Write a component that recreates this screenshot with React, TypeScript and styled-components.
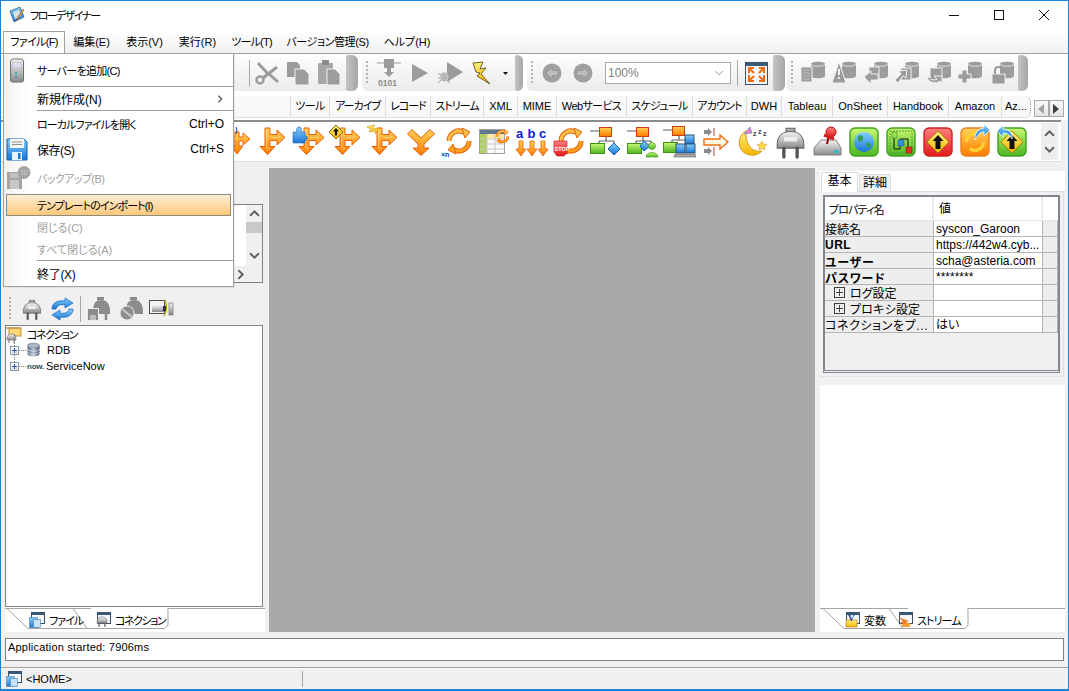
import React from "react";
import styled, { createGlobalStyle } from "styled-components";

const Global = createGlobalStyle`
  html, body { margin: 0; padding: 0; background: #fff; overflow: hidden; }
  #root { width: 1069px; height: 691px; }
  * { box-sizing: border-box; }
`;

const FONT = `"Liberation Sans", "Noto Sans CJK JP", sans-serif`;

const Window = styled.div`
  position: relative;
  width: 1069px;
  height: 691px;
  border: 1px solid #1883d7;
  border-bottom-width: 2px;
  background: #f0f0f0;
  display: flex;
  flex-direction: column;
  font-family: ${FONT};
  font-size: 11px;
  font-feature-settings: "palt";
  color: #000;
  overflow: hidden;
`;

const Txt = styled.span<{ $ls?: number; $fs?: number }>`
  font-size: ${(p) => p.$fs ?? 11}px;
  letter-spacing: ${(p) => p.$ls ?? 0}px;
  white-space: nowrap;
`;

/* ---------- title + menu ---------- */
const TitleBar = styled.div`
  height: 30px;
  background: #fff;
  display: flex;
  align-items: center;
  padding: 0 2px 2px 8px;
  flex: none;
`;
const TitleText = styled.span`
  margin-left: 5px;
  font-size: 11px;
  letter-spacing: -1.6px;
`;
const WinButtons = styled.div`
  margin-left: auto;
  display: flex;
`;
const WinButton = styled.div`
  width: 45px;
  height: 28px;
  display: flex;
  align-items: center;
  justify-content: center;
`;
const MenuBar = styled.div`
  height: 23px;
  flex: none;
  display: flex;
  align-items: center;
  background: linear-gradient(#fff, #f0f0f0);
  border-bottom: 1px solid #a0a0a0;
  padding-left: 2px;
`;
const MenuItem = styled.div<{ $w: number; $open?: boolean; $ls?: number }>`
  width: ${(p) => p.$w}px;
  height: 22px;
  text-align: center;
  line-height: 22px;
  white-space: nowrap;
  font-size: 11px;
  letter-spacing: ${(p) => p.$ls ?? 0}px;
  ${(p) => (p.$open ? "border:1px solid #a0a0a0;border-bottom:none;background:#fff;line-height:21px;z-index:3;" : "")}
`;

/* ---------- toolbar ---------- */
const ToolRow = styled.div`
  height: 41px;
  flex: none;
  display: flex;
  align-items: flex-start;
  padding: 1px 0 0 2px;
  background: #fff;
`;
const ToolGroup = styled.div<{ $w: number; $ml?: number }>`
  width: ${(p) => p.$w}px;
  margin-left: ${(p) => p.$ml ?? 0}px;
  height: 36px;
  display: flex;
  align-items: center;
  border-radius: 5px;
  background: linear-gradient(#fdfdfd, #ebebeb);
`;
const GroupEnd = styled.div<{ $w: number }>`
  margin-left: auto;
  width: ${(p) => p.$w}px;
  height: 36px;
  border-radius: 2px 6px 6px 2px;
  background: linear-gradient(90deg, #c4c4c4, #a6a6a6);
`;
const Grip = styled.div<{ $w?: number }>`
  width: ${(p) => p.$w ?? 11}px;
  height: 24px;
  flex: none;
  padding-left: 4px;
  &::before {
    content: "";
    display: block;
    width: 2px;
    height: 100%;
    background: repeating-linear-gradient(#b4b4b4 0 2px, transparent 2px 4px);
  }
`;
const ToolCell = styled.div<{ $w?: number }>`
  width: ${(p) => p.$w ?? 31}px;
  height: 30px;
  flex: none;
  display: flex;
  align-items: center;
  justify-content: center;
`;
const ToolSep = styled.div<{ $mx?: number }>`
  width: 1px;
  height: 26px;
  flex: none;
  margin: 0 ${(p) => p.$mx ?? 2}px;
  background: #a8a8a8;
`;
const Combo = styled.div`
  width: 126px;
  height: 22px;
  flex: none;
  margin-left: 7px;
  border: 1px solid #a8a8a8;
  background: #fff;
  display: flex;
  align-items: center;
  justify-content: space-between;
  padding: 0 6px 0 2px;
  color: #808080;
  font-size: 12px;
`;

/* ---------- palette ---------- */
const PaletteTabs = styled.div`
  height: 25px;
  flex: none;
  background: #fff;
  display: flex;
  align-items: flex-start;
  padding: 1px 4px 0 0;
`;
const PaletteTab = styled.div<{ $w: number; $ragged?: boolean; $ls?: number }>`
  width: ${(p) => p.$w}px;
  height: 22px;
  flex: none;
  background: #f9f9f9;
  border-right: 1px solid #dcdcdc;
  border-bottom: 1px solid #e0e0e0;
  text-align: center;
  line-height: 21px;
  white-space: nowrap;
  font-size: 11px;
  letter-spacing: ${(p) => p.$ls ?? 0}px;
  ${(p) => (p.$ragged ? "border-right:1px dotted #909090;border-radius:0 6px 6px 0;" : "")}
`;
const TabArrow = styled.div`
  width: 15px;
  height: 17px;
  margin-top: 4px;
  flex: none;
  border: 1px solid #a8a8a8;
  background: linear-gradient(#fafafa, #e4e4e4);
  display: flex;
  align-items: center;
  justify-content: center;
`;
const TabArrows = styled.div`
  margin-left: 3px;
  display: flex;
  gap: 0;
`;
const PaletteBody = styled.div`
  height: 42px;
  flex: none;
  margin-right: 7px;
  background: #fff;
  border-top: 2px solid #8c8c8c;
  border-bottom: 1px solid #dcdcdc;
  display: flex;
  align-items: center;
  padding-left: 32px;
`;
const PaletteCell = styled.div<{ $shift?: number }>`
  width: 36.95px;
  height: 38px;
  flex: none;
  display: flex;
  align-items: center;
  justify-content: center;
  padding-left: ${(p) => p.$shift ?? 0}px;
`;
const PaletteScroll = styled.div`
  margin-left: 11px;
  width: 17px;
  height: 37px;
  flex: none;
  background: #eeeeee;
  display: flex;
  flex-direction: column;
  align-items: center;
  justify-content: space-between;
  padding: 5px 0;
`;

/* ---------- main ---------- */
const Main = styled.div`
  margin-top: 6px;
  height: 464px;
  flex: none;
  display: flex;
  padding-left: 4px;
`;
const LeftCol = styled.div`
  width: 258px;
  flex: none;
  display: flex;
  flex-direction: column;
`;
const ListArea = styled.div`
  height: 124px;
  flex: none;
  padding-top: 36px;
`;
const ListFrame = styled.div`
  height: 79px;
  border: 1px solid #80808c;
  background: #f0f0f0;
  display: grid;
  grid-template-columns: 1fr 16px;
  grid-template-rows: 1fr 16px;
`;
const ListWhite = styled.div`
  background: #fff;
  border-radius: 0 0 3px 0;
`;
const VScroll = styled.div`
  display: flex;
  flex-direction: column;
  align-items: center;
  padding-top: 3px;
`;
const VThumb = styled.div`
  width: 100%;
  height: 11px;
  margin: 3px 0 17px;
  background: #c9c9c9;
`;
const HScrollSlot = styled.div`
  grid-column: 1;
  display: flex;
  justify-content: flex-end;
  align-items: center;
`;
const LeftTools = styled.div`
  height: 33px;
  flex: none;
  display: flex;
  align-items: center;
`;
const Tree = styled.div`
  height: 282px;
  flex: none;
  background: #fff;
  border: 1px solid #80808c;
  position: relative;
`;
const TreeRow = styled.div<{ $child?: boolean }>`
  height: 16px;
  display: flex;
  align-items: center;
  position: relative;
  padding-left: ${(p) => (p.$child ? 4 : 0)}px;
  font-size: 11px;
  white-space: nowrap;
  ${(p) =>
    p.$child
      ? `&::before{content:"";position:absolute;left:8px;top:-8px;height:12px;border-left:1px dotted #808080;}`
      : ""}
`;
const PlusBox = styled.span`
  width: 9px;
  height: 9px;
  flex: none;
  border: 1px solid #8c9aa8;
  background: linear-gradient(#fff, #dde3ea);
  position: relative;
  z-index: 1;
  &::before { content: ""; position: absolute; left: 1px; right: 1px; top: 3px; height: 1px; background: #2050a0; }
  &::after { content: ""; position: absolute; top: 1px; bottom: 1px; left: 3px; width: 1px; background: #2050a0; }
`;
const Dots = styled.span`
  width: 7px;
  flex: none;
  border-top: 1px dotted #808080;
  margin-right: 1px;
`;
const TreeLabel = styled.span<{ $ml: number; $ls?: number }>`
  margin-left: ${(p) => p.$ml}px;
  font-size: 11px;
  letter-spacing: ${(p) => p.$ls ?? 0}px;
`;
const NowMark = styled.span`
  width: 17px;
  flex: none;
  font-size: 8px;
  font-weight: 700;
  color: #30504c;
  letter-spacing: -0.2px;
`;
const Canvas = styled.div`
  width: 546px;
  margin-left: 6px;
  flex: none;
  background: #a9a9a9;
`;
const RightCol = styled.div`
  width: 245px;
  margin-left: 5px;
  flex: none;
  display: flex;
  flex-direction: column;
  padding-top: 3px;
`;
const PropBox = styled.div`
  height: 205px;
  flex: none;
  background: #f0f0f0;
  display: flex;
  flex-direction: column;
`;
const PropTabs = styled.div`
  height: 21px;
  flex: none;
  background: #fff;
  display: flex;
  align-items: flex-end;
  padding-left: 1px;
  border-bottom: 1px solid #dcdcdc;
`;
const PropTab = styled.div<{ $w: number; $on?: boolean }>`
  width: ${(p) => p.$w}px;
  height: ${(p) => (p.$on ? 20 : 17)}px;
  text-align: center;
  line-height: ${(p) => (p.$on ? 17 : 16)}px;
  font-size: 12px;
  border: 1px solid #dcdcdc;
  border-bottom: none;
  background: ${(p) => (p.$on ? "#fff" : "#f0f0f0")};
  margin-right: 1px;
  ${(p) => (p.$on ? "margin-bottom:-1px;" : "")}
`;
const PropPanel = styled.div`
  flex: 1;
  padding: 3px 2px 3px 3px;
  border: 1px solid #e2e2e2;
  border-top: none;
  border-left: none;
  margin-right: 1px;
`;
const PropFrame = styled.div`
  height: 178px;
  width: 237px;
  border: 2px solid #85858f;
  border-bottom-style: double;
  border-bottom-width: 3px;
  background: #efefef;
`;
const PropRow = styled.div<{ $head?: boolean }>`
  display: grid;
  grid-template-columns: 109px 109px 15px;
  height: ${(p) => (p.$head ? 24 : 16)}px;
  width: 233px;
  ${(p) => (p.$head ? "" : "border-bottom:1px solid #b4b4b4;")}
`;
const PropName = styled.div<{ $head?: boolean; $bold?: boolean; $indent?: number }>`
  background: ${(p) => (p.$head ? "#fff" : "#eeeeee")};
  ${(p) => (p.$head ? "border-right:2px solid #ececec;border-bottom:1px solid #e4e4e4;" : "border-right:1px solid #b4b4b4;")}
  ${(p) => (p.$bold ? "padding-top:1px;font-weight:700;" : "font-weight:400;")}
  padding-left: ${(p) => p.$indent ?? (p.$head ? 4 : 0)}px;
  display: flex;
  align-items: center;
  white-space: nowrap;
  overflow: hidden;
`;
const PropValue = styled.div<{ $head?: boolean }>`
  background: #fff;
  ${(p) => (p.$head ? "border-right:2px solid #ececec;border-bottom:1px solid #e4e4e4;line-height:25px;padding-left:5px;" : "border-right:1px solid #b4b4b4;line-height:16px;padding-left:2px;")}
  font-size: 12px;
  white-space: nowrap;
  overflow: hidden;
`;
const PropEnd = styled.div<{ $head?: boolean }>`
  background: ${(p) => (p.$head ? "#fff" : "#eeeeee")};
  ${(p) => (p.$head ? "border-bottom:1px solid #e4e4e4;" : "border-right:1px solid #b4b4b4;")}
`;
const Expand = styled.span`
  width: 11px;
  height: 11px;
  flex: none;
  margin-right: 5px;
  border: 1px solid #404040;
  position: relative;
  &::before { content: ""; position: absolute; left: 1px; right: 1px; top: 4px; height: 1px; background: #404040; }
  &::after { content: ""; position: absolute; top: 1px; bottom: 1px; left: 4px; width: 1px; background: #404040; }
`;
const WhitePanel = styled.div`
  margin-top: 9px;
  flex: 1;
  background: #fff;
`;
const BottomTabs = styled.div<{ $w: number }>`
  position: relative;
  width: ${(p) => p.$w}px;
  height: 25px;
  flex: none;
  background: #fff;
  display: flex;
  align-items: center;
  font-size: 11px;
`;
const TabOutline = styled.svg`
  position: absolute;
  left: 0;
  top: 0;
`;
const BottomTabLabel = styled.div<{ $ml: number }>`
  position: relative;
  margin-left: ${(p) => p.$ml}px;
  display: flex;
  align-items: center;
  gap: 4px;
`;

/* ---------- log + status ---------- */
const LogBox = styled.div`
  margin: 6px 4px 0 4px;
  height: 23px;
  flex: none;
  background: #fff;
  border: 1px solid #80808c;
  padding: 1px 2px;
  line-height: 15px;
  font-size: 11px;
  letter-spacing: 0.2px;
`;
const StatusBar = styled.div`
  margin-top: 6px;
  flex: 1;
  border-top: 1px solid #a0a0a0;
  box-shadow: inset 0 1px 0 #fafafa;
  display: flex;
  align-items: center;
  padding-left: 5px;
`;
const StatusHome = styled.div`
  width: 297px;
  height: 16px;
  flex: none;
  display: flex;
  align-items: center;
  gap: 4px;
  border-right: 1px solid #a8a8a8;
  font-size: 11px;
`;

/* ---------- file menu ---------- */
const FileMenu = styled.div`
  position: absolute;
  left: 2px;
  top: 52px;
  width: 231px;
  height: 234px;
  background: linear-gradient(90deg, #f2f2f2 0, #fff 25px, #fff 100%);
  border: 1px solid #a0a0a0;
  box-shadow: 1px 1px 0 rgba(0, 0, 0, 0.06);
  z-index: 2;
  display: flex;
  flex-direction: column;
  font-size: 11px;
`;
const MenuRow = styled.div<{ $h: number; $off?: boolean; $active?: boolean }>`
  height: ${(p) => p.$h}px;
  flex: none;
  display: flex;
  align-items: center;
  padding-right: 9px;
  color: ${(p) => (p.$off ? "#a0a0a0" : "#000")};
  ${(p) =>
    p.$active
      ? "background:linear-gradient(#fdedd2,#fdc87c);border:1px solid #908c7c;margin:0 2px;padding-right:7px;"
      : ""}
`;
const MenuIconSlot = styled.div<{ $active?: boolean; $pl?: number }>`
  width: ${(p) => (p.$active ? 30 : 33)}px;
  flex: none;
  display: flex;
  align-items: center;
  padding-left: ${(p) => p.$pl ?? 2}px;
`;
const MenuShortcut = styled.span`
  margin-left: auto;
  font-size: 12px;
`;
const MenuSep = styled.div`
  height: 1px;
  flex: none;
  margin-left: 33px;
  background: #a0a0a0;
`;

/* ---------- icon primitives ---------- */
const Ico = styled.svg`
  display: block;
  flex: none;
  overflow: visible;
`;

const Defs = () => (
  <svg width="0" height="0" style={{ position: "absolute" }}>
    <defs>
      <linearGradient id="og" x1="0" y1="0" x2="0" y2="1"><stop offset="0" stopColor="#ffd257" /><stop offset="1" stopColor="#ff7b00" /></linearGradient>
      <linearGradient id="gg" x1="0" y1="0" x2="0" y2="1"><stop offset="0" stopColor="#c8f870" /><stop offset="1" stopColor="#4cb524" /></linearGradient>
      <linearGradient id="rg" x1="0" y1="0" x2="0" y2="1"><stop offset="0" stopColor="#ff8080" /><stop offset="1" stopColor="#e21a1a" /></linearGradient>
      <linearGradient id="bg" x1="0" y1="0" x2="0" y2="1"><stop offset="0" stopColor="#86d0ff" /><stop offset="1" stopColor="#1876d6" /></linearGradient>
      <linearGradient id="yg" x1="0" y1="0" x2="0" y2="1"><stop offset="0" stopColor="#fff080" /><stop offset="1" stopColor="#f4b400" /></linearGradient>
      <linearGradient id="sg" x1="0" y1="0" x2="0" y2="1"><stop offset="0" stopColor="#f6f6f6" /><stop offset="1" stopColor="#8a8a8a" /></linearGradient>
      <linearGradient id="dg" x1="0" y1="0" x2="1" y2="0"><stop offset="0" stopColor="#4f6478" /><stop offset=".5" stopColor="#b8c4d4" /><stop offset="1" stopColor="#3c5068" /></linearGradient>
    </defs>
  </svg>
);

const OS = "#e8610a";
const FORK = "M5 1H10V7.500H17V3L25 10.500L17 18V13.500H10V19.500H15L7.500 27.500L0 19.500H5Z";

const Badge = ({ kind }: { kind: "puzzle" | "diamond" | "bolt" }) => {
  if (kind === "puzzle")
    return <path d="M0 6H4C3 3 4 1 6 1S9 3 8 6H12V10C15 9 15 15 12 14V17H0Z" fill="url(#bg)" stroke="#1a5fb4" strokeWidth=".6" transform="translate(-6 -1)" />;
  if (kind === "diamond")
    return (
      <g transform="translate(-6 -2)">
        <path d="M7 0L14 7L7 14L0 7Z" fill="url(#yg)" stroke="#8a6a00" />
        <path d="M7 3L10 6.500H8V10.500H6V6.500H4Z" fill="#111" />
      </g>
    );
  return <path d="M0 2L8 0L5 4L13 3L8 9L9 6L2 7L4 4Z" fill="url(#yg)" stroke="#d89000" strokeWidth=".6" transform="translate(-5 -2)" />;
};

const Fork = ({ badge }: { badge?: "puzzle" | "diamond" | "bolt" }) => (
  <Ico width="26" height="29" viewBox="0 0 26 29">
    <path d={FORK} fill="url(#og)" stroke={OS} strokeWidth="1" />
    <path d="M6.500 3V21H10L7.500 24M12 10.500H20" fill="none" stroke="#fff" strokeOpacity=".35" />
    {badge && <Badge kind={badge} />}
  </Ico>
);

const RadioFork = () => (
  <Ico width="26" height="29" viewBox="0 0 26 29">
    <path d="M10 5H14V10H18V6L25 12L18 18V14H14V19H18L12 27L6 19H10V14H6V18L0 12L6 6V10H10Z" fill="url(#og)" stroke={OS} />
    <path d="M8 1A5 5 0 0 1 8 6M11 0A7 7 0 0 1 11 7" fill="none" stroke="#2040b0" />
  </Ico>
);

const YMerge = () => (
  <Ico width="28" height="28" viewBox="0 0 28 28">
    <path d="M.5 6L5 1.500L14 10L23 1.500L27.500 6L17 16V20H22L14 27.500L6 20H11V16Z" fill="url(#og)" stroke={OS} />
  </Ico>
);

const Cycle = ({ s = 28 }: { s?: number }) => (
  <g transform={`scale(${s / 28})`}>
    <path d="M4 14A10 10 0 0 1 20 6" fill="none" stroke={OS} strokeWidth="5" />
    <path d="M4 14A10 10 0 0 1 20 6" fill="none" stroke="#ffc04a" strokeWidth="3" />
    <path d="M24 14A10 10 0 0 1 8 22" fill="none" stroke={OS} strokeWidth="5" />
    <path d="M24 14A10 10 0 0 1 8 22" fill="none" stroke="#ffa020" strokeWidth="3" />
    <path d="M17 1L25 5L20 11Z" fill="#ffc04a" stroke={OS} />
    <path d="M11 27L3 23L8 17Z" fill="#ffa020" stroke={OS} />
  </g>
);

const Loop = () => (
  <Ico width="30" height="30" viewBox="0 0 30 30">
    <g transform="translate(2 0)"><Cycle /></g>
    <text x="-2" y="30" fontSize="7" fontWeight="700" fill="#2030c0" fontFamily="Liberation Sans">×n</text>
  </Ico>
);

const TableIcon = () => (
  <Ico width="32" height="28" viewBox="0 0 32 28">
    <rect x=".5" y="1.500" width="25" height="24" fill="#fafafa" stroke="#a0a0a0" />
    <rect x="1" y="2" width="24" height="4" fill="#607890" />
    <rect x="1" y="6" width="7" height="19" fill="#b0d060" />
    <rect x="8" y="6" width="17" height="5" fill="#ffe9a0" />
    <path d="M1 11H25M1 16H25M1 21H25M8 6V25M16 6V25" stroke="#c8c8c8" />
    <g transform="translate(16 1)"><Cycle s={15} /></g>
  </Ico>
);

const DownArrow = ({ x }: { x: number }) => (
  <path d={`M${x + 3} 14H${x + 7}V22H${x + 10}L${x + 5} 29L${x} 22H${x + 3}Z`} fill="url(#og)" stroke={OS} strokeWidth=".8" />
);

const AbcIcon = () => (
  <Ico width="34" height="30" viewBox="0 0 34 30">
    <text x="1" y="11" fontSize="13" fontWeight="700" fill="#1018d8" fontFamily="Liberation Sans">a</text>
    <text x="12.500" y="11" fontSize="13" fontWeight="700" fill="#1018d8" fontFamily="Liberation Sans">b</text>
    <text x="24" y="11" fontSize="13" fontWeight="700" fill="#1018d8" fontFamily="Liberation Sans">c</text>
    <DownArrow x={1} /><DownArrow x={12} /><DownArrow x={23} />
  </Ico>
);

const StopLoop = () => (
  <Ico width="32" height="30" viewBox="0 0 32 30">
    <g transform="translate(4 0)"><Cycle /></g>
    <path d="M1 14H14V26L11 29H4L1 25Z" fill="url(#rg)" stroke="#c01010" strokeWidth=".6" />
    <text x="1.500" y="24" fontSize="5.500" fontWeight="700" fill="#fff" fontFamily="Liberation Sans">STOP</text>
  </Ico>
);

const TreeBase = () => (
  <>
    <path d="M0 4H9M16 8V14M9 14H24M9 14V18M24 14V18" fill="none" stroke="#606060" strokeWidth="1.200" />
    <rect x="9.500" y="0.500" width="12" height="9" fill="url(#og)" stroke="#c84010" />
    <rect x="0.500" y="16.500" width="14" height="10" fill="url(#gg)" stroke="#409010" />
  </>
);
const Flow1 = () => (
  <Ico width="31" height="30" viewBox="0 0 31 30">
    <TreeBase />
    <path d="M24 16L30 22L24 28L18 22Z" fill="url(#bg)" stroke="#1060c0" />
  </Ico>
);
const Flow2 = () => (
  <Ico width="31" height="30" viewBox="0 0 31 30">
    <TreeBase />
    <path d="M17 14L23 19L17 24L13 19Z" fill="url(#bg)" stroke="#1060c0" />
    <circle cx="25" cy="19" r="3.500" fill="url(#gg)" stroke="#409010" strokeWidth=".6" />
    <path d="M19 30C19 24 31 24 31 30Z" fill="url(#gg)" stroke="#409010" strokeWidth=".6" />
  </Ico>
);
const Flow3 = () => (
  <Ico width="33" height="32" viewBox="0 0 33 32">
    <TreeBase />
    <rect x="22" y="9" width="9" height="9" fill="url(#bg)" stroke="#305070" />
    <rect x="13" y="18" width="9" height="9" fill="url(#bg)" stroke="#305070" />
    <rect x="23" y="18" width="9" height="9" fill="url(#bg)" stroke="#305070" />
    <path d="M12 28H32L33 31H11Z" fill="#a8a8a8" stroke="#606060" strokeWidth=".6" />
  </Ico>
);
const ArrowIn = () => (
  <Ico width="26" height="30" viewBox="0 0 26 30">
    <path d="M1 3H5V1L9 5L5 9V7H1Z" fill="#8c8c8c" />
    <path d="M1 22H5V20L9 24L5 28V26H1Z" fill="#8c8c8c" />
    <path d="M11 1V9M11 20V29" stroke="#c04040" />
    <path d="M1 12H17V8L25 15L17 22V18H1Z" fill="#fff6e0" stroke="#f07010" strokeWidth="1.400" />
  </Ico>
);
const Moon = () => (
  <Ico width="30" height="32" viewBox="0 0 30 32">
    <path d="M8 5C-2 10 -1 27 12 29C17 30 21 28 24 25C14 27 7 18 8 5Z" fill="url(#yg)" stroke="#d89a20" />
    <path d="M6 8L12 1L14 7Z" fill="#e080d0" stroke="#6080c0" strokeWidth=".6" />
    <text x="15" y="10" fontSize="7" fontWeight="700" fill="#444" fontFamily="Liberation Sans">z</text>
    <text x="20" y="8" fontSize="7" fontWeight="700" fill="#444" fontFamily="Liberation Sans">z</text>
    <text x="25" y="10" fontSize="7" fontWeight="700" fill="#444" fontFamily="Liberation Sans">z</text>
    <path d="M24 15L25.500 18L29 18.500L26.500 21L27 24L24 22.500L21 24L21.500 21L19 18.500L22.500 18Z" fill="#ffd850" stroke="#c09020" strokeWidth=".5" />
  </Ico>
);
const Plug = ({ w = 28 }: { w?: number }) => (
  <Ico width={w} height={w} viewBox="0 0 28 28">
    <path d="M10 2H18V6H10Z" fill="#a8a8a8" stroke="#666" />
    <path d="M2 17C2 8 8 5 14 5S26 8 26 17V20H2Z" fill="url(#sg)" stroke="#666" />
    <path d="M8 20V28M20 20V28" stroke="#555" strokeWidth="3" strokeLinecap="round" />
    <path d="M8 10H20V14H8Z" fill="#fff" opacity=".7" />
  </Ico>
);
const Pin = () => (
  <Ico width="31" height="31" viewBox="0 0 31 31">
    <path d="M2 22L9 14H24L29 22V29H2Z" fill="url(#sg)" stroke="#808080" />
    <rect x="22" y="24" width="4" height="3" fill="#20c0d0" />
    <path d="M15 18L17 9" stroke="#900" strokeWidth="2" />
    <circle cx="19" cy="6" r="5" fill="url(#rg)" stroke="#b01010" />
    <path d="M12 9L22 13" stroke="#d02020" strokeWidth="3" />
  </Ico>
);
const GreenSquare = ({ children, top = "url(#gg)", stroke = "#40a020" }: { children?: React.ReactNode; top?: string; stroke?: string }) => (
  <Ico width="30" height="30" viewBox="0 0 30 30">
    <rect x="1" y="1" width="28" height="28" rx="5" fill={top} stroke={stroke} strokeWidth="1.400" />
    {children}
  </Ico>
);
const YellowSign = () => (
  <>
    <path d="M15 4L26 15L15 26L4 15Z" fill="url(#yg)" stroke="#b08000" />
    <path d="M15 8L20.500 14H17.500V22H12.500V14H9.500Z" fill="#111" />
  </>
);
const BlueCurl = ({ flip }: { flip?: boolean }) => (
  <g transform={flip ? "translate(-2 -2)" : "translate(13 -3)"}>
    <path d={flip ? "M2 6L8 0V4C14 4 18 8 17 14C15 10 12 8 8 8V12Z" : "M17 6L11 0V4C5 4 1 10 2 16C4 12 7 8 11 8V12Z"} fill="url(#bg)" stroke="#fff" strokeWidth=".8" />
  </g>
);

/* gray toolbar glyphs */
const GRAY = "#9c9c9c";
const Scissors = () => (
  <Ico width="24" height="24" viewBox="0 0 24 24">
    <path d="M3 2L14 14M22 6L8 17" stroke={GRAY} strokeWidth="3" />
    <circle cx="5" cy="19" r="3.500" fill="none" stroke={GRAY} strokeWidth="2.500" />
    <path d="M13 12L23 21" stroke={GRAY} strokeWidth="3" />
  </Ico>
);
const Copy = () => (
  <Ico width="24" height="24" viewBox="0 0 24 24">
    <path d="M1 1H11L14 4V16H1Z" fill={GRAY} />
    <path d="M9 8H18L23 13V24H9Z" fill={GRAY} stroke="#f2f2f2" strokeWidth="1" />
  </Ico>
);
const Paste = () => (
  <Ico width="24" height="26" viewBox="0 0 24 26">
    <rect x="1" y="3" width="15" height="21" rx="1" fill="#a8a8a8" />
    <rect x="5" y="0" width="7" height="5" fill="#8c8c8c" />
    <path d="M10 9H18L23 14V25H10Z" fill={GRAY} stroke="#f2f2f2" />
  </Ico>
);
const Bin = () => (
  <Ico width="24" height="26" viewBox="0 0 24 26">
    <path d="M0 6C5 10 15 10 23 6V20C15 23 5 23 0 20Z" fill={GRAY} />
    <rect x="8" y="11" width="7" height="4" fill="#ddd" />
  </Ico>
);
const Compile = () => (
  <Ico width="26" height="28" viewBox="0 0 26 28">
    <path d="M1 4H25" stroke={GRAY} />
    <rect x="8" y="0" width="10" height="9" fill={GRAY} />
    <path d="M11 9H15V13H18L13 18L8 13H11Z" fill={GRAY} />
    <text x="2" y="27" fontSize="8.500" fontWeight="700" fill="#8c8c8c" fontFamily="Liberation Sans">0101</text>
  </Ico>
);
const Play = () => (
  <Ico width="18" height="20" viewBox="0 0 18 20"><path d="M1 1L17 10L1 19Z" fill={GRAY} /></Ico>
);
const Debug = () => (
  <Ico width="26" height="24" viewBox="0 0 26 24">
    <path d="M9 1L25 11L9 21Z" fill={GRAY} />
    <ellipse cx="6" cy="16" rx="4" ry="5" fill="#b8b8b8" stroke="#e8e8e8" strokeWidth=".8" />
    <path d="M0 12L3 14M0 17H3M0 22L3 19M12 12L9 14M12 17H9M12 22L9 19" stroke="#a0a0a0" />
  </Ico>
);
const Bolt = () => (
  <Ico width="17" height="22" viewBox="0 0 17 22">
    <path d="M0 1L10 0L7 7L13 6L8 12L17 22L4 14L7 11L3 10Z" fill="url(#yg)" stroke="#4a4000" strokeWidth=".8" />
  </Ico>
);
const Caret = () => (
  <Ico width="5" height="3" viewBox="0 0 5 3"><path d="M0 0H5L2.500 3Z" fill="#111" /></Ico>
);
const NavCircle = ({ dir }: { dir: 1 | -1 }) => (
  <Ico width="20" height="20" viewBox="0 0 20 20">
    <circle cx="10" cy="10" r="9.500" fill="#a0a0a0" />
    <path d={dir === -1 ? "M4 10L10 4V7.500H16V12.500H10V16Z" : "M16 10L10 4V7.500H4V12.500H10V16Z"} fill="#bcbcbc" stroke="#8c8c8c" strokeWidth=".6" />
  </Ico>
);
const Fit = () => (
  <Ico width="23" height="23" viewBox="0 0 23 23">
    <rect x=".5" y=".5" width="22" height="22" fill="#f4f8fc" stroke="#3a5068" />
    <rect x="1" y="1" width="21" height="3" fill="#3a5a7a" />
    <g stroke="#f06a10" strokeWidth="2" fill="none">
      <path d="M4 11V6H9M19 11V6H14M4 13V19H9M19 13V19H14" />
      <path d="M4 6L9 11M19 6L14 11M4 19L9 14M19 19L14 14" />
    </g>
  </Ico>
);
const Barrel = () => (
  <>
    <path d="M11 3C11 0 25 0 25 3V15C25 18 11 18 11 15Z" fill={GRAY} />
    <path d="M11 3C11 6 25 6 25 3" fill="none" stroke="#f0f0f0" strokeWidth=".8" />
  </>
);
const DbGray = ({ kind }: { kind: number }) => (
  <Ico width="26" height="24" viewBox="0 0 26 24">
    <Barrel />
    {kind === 0 && (
      <>
        <rect x="1" y="6" width="11" height="15" fill={GRAY} stroke="#f0f0f0" />
        <path d="M3 9H10M3 12H10M3 15H10M3 18H10" stroke="#bdbdbd" />
      </>
    )}
    {kind === 1 && (
      <>
        <path d="M8 1L15 22H1Z" fill={GRAY} stroke="#f0f0f0" />
        <rect x="7" y="8" width="2" height="6" fill="#f0f0f0" />
        <rect x="7" y="16" width="2" height="2" fill="#f0f0f0" />
      </>
    )}
    {kind === 2 && (
      <>
        <rect x="6" y="6" width="10" height="12" fill={GRAY} stroke="#f0f0f0" />
        <path d="M1 16L8 10V13H15V19H8V23Z" fill={GRAY} stroke="#f0f0f0" />
      </>
    )}
    {kind === 3 && (
      <>
        <rect x="7" y="7" width="10" height="12" fill={GRAY} stroke="#f0f0f0" />
        <path d="M13 9L12 17L9 15L4 22L1 19L7 13L5 10Z" fill={GRAY} stroke="#f0f0f0" />
      </>
    )}
    {kind === 4 && (
      <>
        <rect x="4" y="7" width="12" height="12" fill={GRAY} stroke="#f0f0f0" />
        <path d="M1 17C4 22 10 23 14 20L16 23V15H8L11 18C8 20 5 19 3 16Z" fill={GRAY} stroke="#f0f0f0" />
      </>
    )}
    {kind === 5 && <path d="M5 9H10V13H14V18H10V22H5V18H1V13H5Z" fill={GRAY} stroke="#f0f0f0" />}
    {kind === 6 && (
      <>
        <rect x="3" y="13" width="13" height="10" fill={GRAY} stroke="#f0f0f0" />
        <path d="M6 13V9C6 5 13 5 13 9V13" fill="none" stroke={GRAY} strokeWidth="2" />
      </>
    )}
  </Ico>
);
const Chevron = ({ dir, size = 10, color = "#606060", sw = 1.8 }: { dir: "up" | "down" | "left" | "right"; size?: number; color?: string; sw?: number }) => {
  const d = { up: "M1 7L5 3L9 7", down: "M1 3L5 7L9 3", left: "M7 1L3 5L7 9", right: "M3 1L7 5L3 9" }[dir];
  return (
    <Ico width={size} height={size} viewBox="0 0 10 10">
      <path d={d} fill="none" stroke={color} strokeWidth={sw} />
    </Ico>
  );
};
const TriBtn = ({ dir, on }: { dir: "l" | "r"; on?: boolean }) => (
  <Ico width="7" height="10" viewBox="0 0 7 10">
    <path d={dir === "l" ? "M6 0V10L0 5Z" : "M0 0V10L6 5Z"} fill={on ? "#404040" : "#a0a0a0"} />
  </Ico>
);

/* menu + small icons */
const Server = () => (
  <Ico width="14" height="25" viewBox="0 0 14 25">
    <path d="M2 1H12L13.500 3V23L12 24H2L.5 23V3Z" fill="url(#sg)" stroke="#707070" />
    <rect x="2.500" y="4" width="9" height="6" fill="#dde" stroke="#aaa" strokeWidth=".5" />
    <rect x="5" y="14" width="2" height="2" fill="#30a8d8" />
    <rect x="5" y="18" width="2" height="2" fill="#30a8d8" />
  </Ico>
);
const SaveBlue = () => (
  <Ico width="22" height="23" viewBox="0 0 22 23">
    <path d="M1 1H18L21 4V22H1Z" fill="url(#bg)" stroke="#1060a8" />
    <rect x="4" y="1" width="14" height="9" fill="#f4f4f4" />
    <path d="M6 4H16M6 6.500H16" stroke="#909090" />
    <rect x="6" y="14" width="10" height="8" fill="#e8f4fc" />
    <rect x="12" y="15" width="2.500" height="6" fill="#1876d6" />
  </Ico>
);
const SaveChat = () => (
  <Ico width="25" height="24" viewBox="0 0 25 24">
    <path d="M1 6H16V23H1Z" fill="#a4a4a4" />
    <rect x="4" y="14" width="9" height="9" fill="#c8c8c8" />
    <rect x="4" y="7" width="9" height="5" fill="#c0c0c0" />
    <circle cx="18" cy="6.500" r="6.500" fill="#a4a4a4" />
    <path d="M15 5H22M15 8H21" stroke="#c8c8c8" />
  </Ico>
);
const AppIcon = () => (
  <Ico width="16" height="16" viewBox="0 0 16 16">
    <path d="M1 4L11 0L15 10L5 15Z" fill="url(#bg)" stroke="#35506c" strokeWidth=".7" />
    <path d="M4 5L10 3L12 9L6 12Z" fill="#cfe3f5" />
    <path d="M14 2L8 11L7 13L9 12L15 3Z" fill="#e8a030" stroke="#704010" strokeWidth=".4" />
  </Ico>
);
const RefreshBlue = () => (
  <Ico width="23" height="24" viewBox="0 0 23 24">
    <path d="M1 12C1 5 8 3 14 4V1L22 6L14 11V8C10 7 6 8 5 12Z" fill="url(#bg)" stroke="#1060c0" strokeWidth=".7" />
    <path d="M22 12C22 19 15 21 9 20V23L1 18L9 13V16C13 17 17 16 18 12Z" fill="url(#bg)" stroke="#1060c0" strokeWidth=".7" />
  </Ico>
);
const PlugSave = () => (
  <Ico width="25" height="24" viewBox="0 0 25 24">
    <g transform="translate(6 0)"><path d="M4 0H11V3H4ZM0 14C0 6 3 3 8 3S17 6 17 14V17H0Z" fill="#8c8c8c" /><path d="M4 17V23M13 17V23" stroke="#8c8c8c" strokeWidth="2.500" /></g>
    <rect x=".5" y="11.500" width="11" height="12" fill="#8c8c8c" stroke="#eee" />
    <rect x="3" y="18" width="6" height="5" fill="#bcbcbc" />
  </Ico>
);
const PlugNo = () => (
  <Ico width="25" height="24" viewBox="0 0 25 24">
    <g transform="translate(7 0)"><path d="M4 0H11V3H4ZM0 14C0 6 3 3 8 3S17 6 17 14V17H0Z" fill="#8c8c8c" /></g>
    <circle cx="8" cy="16" r="7" fill="#8c8c8c" stroke="#eee" />
    <path d="M3 12L13 20" stroke="#c8c8c8" strokeWidth="2" />
  </Ico>
);
const Cams = () => (
  <Ico width="25" height="22" viewBox="0 0 25 22">
    <rect x=".5" y="2.500" width="15" height="13" fill="#f4f4f4" stroke="#505050" />
    <rect x="3" y="7" width="12" height="7" fill="url(#sg)" />
    <path d="M16 2C18 7 18 13 15 18" fill="none" stroke="#b8b020" strokeWidth="1.500" />
    <rect x="14" y="8" width="3" height="5" fill="#303030" />
    <rect x="20" y="5" width="4" height="12" fill="url(#sg)" stroke="#606060" strokeWidth=".6" />
  </Ico>
);
const ConnRoot = () => (
  <Ico width="16" height="17" viewBox="0 0 16 17">
    <rect x="3" y="2" width="12" height="8" fill="#ffd870" stroke="#b89040" />
    <path d="M0 2H15" stroke="#c09850" strokeWidth="1.500" />
    <path d="M1 14C1 9 3 8 5.500 8S10 9 10 14Z" fill="url(#sg)" stroke="#707070" strokeWidth=".6" />
    <path d="M3 14V17M8 14V17" stroke="#666" />
  </Ico>
);
const DbBlue = () => (
  <Ico width="13" height="14" viewBox="0 0 13 14">
    <ellipse cx="6.500" cy="2.500" rx="6" ry="2.300" fill="#a8b8cc" stroke="#445a72" strokeWidth=".5" />
    <path d="M.5 2.500V11C.5 14 12.500 14 12.500 11V2.500C12.500 5.500 .5 5.500 .5 2.500Z" fill="url(#dg)" />
    <path d="M.5 6C.5 9 12.500 9 12.500 6M.5 9C.5 12 12.500 12 12.500 9" fill="none" stroke="#e8eef4" strokeWidth=".7" />
  </Ico>
);
const WinTab = ({ kind }: { kind: "file" | "conn" | "var" | "stream" }) => (
  <Ico width="16" height="16" viewBox="0 0 16 16">
    <rect x="2.500" y=".5" width="13" height="11" fill="#f4f8fc" stroke="#3a5068" />
    <rect x="3" y="1" width="12" height="2" fill="#3a5a7a" />
    {kind === "file" && (
      <>
        <rect x="0.500" y="5.500" width="8" height="10" fill="url(#bg)" stroke="#5080b0" strokeWidth=".6" />
        <rect x="4.500" y="7.500" width="7" height="8" fill="#c8e4fa" stroke="#5080b0" strokeWidth=".6" />
      </>
    )}
    {kind === "conn" && (
      <>
        <path d="M2 11C2 6 4 5 7 5S12 6 12 11Z" fill="url(#sg)" stroke="#707070" strokeWidth=".6" />
        <path d="M4 11V15M10 11V15" stroke="#707070" strokeWidth="1.400" />
      </>
    )}
    {kind === "var" && (
      <>
        <rect x="2" y="8" width="11" height="7" fill="url(#yg)" stroke="#a88020" strokeWidth=".6" />
        <text x="4" y="9" fontSize="9" fontWeight="700" fill="#2030a0" fontFamily="Liberation Serif">V</text>
      </>
    )}
    {kind === "stream" && (
      <>
        <path d="M1 5L12 9L9 10L14 14L3 11L6 9Z" fill="#f07a20" />
        <path d="M5 12L13 11V15L5 15Z" fill="#ffa030" />
      </>
    )}
  </Ico>
);

const TabShape = ({ w, a, sel }: { w: number; a: number; sel: [number, number] }) => (
  <TabOutline width={w} height="25" viewBox={`0 0 ${w} 25`} fill="none" stroke="#a4a4a4">
    <path d={`M-3 1.500H${sel[0]}`} />
    <path d={`M${sel[1]} 1.500H${w}`} />
    <path d={`M${a} 1.500L${a + 21} 21.500H${a + 80}L${a + 66} 1.500`} />
    <path d={`M${a + 80} 21.500L${a + 84} 21.500H${sel[1] - 3}L${sel[1]} 18V1.500`} />
  </TabOutline>
);

const topTabs: [string, number, number][] = [
  ["ツール", 39, -0.6], ["アーカイブ", 56, -1], ["レコード", 45, -1], ["ストリーム", 53, -1], ["XML", 34, 0], ["MIME", 39, 0],
  ["Webサービス", 70, -0.6], ["スケジュール", 66, -0.7], ["アカウント", 54, -0.8], ["DWH", 35, 0], ["Tableau", 51, 0], ["OnSheet", 55, 0],
  ["Handbook", 61, 0], ["Amazon", 53, 0],
];

const paletteIcons: { ic: React.ReactNode; shift?: number }[] = [
  { ic: <Fork /> }, { ic: <Fork badge="puzzle" />, shift: 3 }, { ic: <Fork badge="diamond" />, shift: 3 }, { ic: <Fork badge="bolt" />, shift: 3 }, { ic: <YMerge /> }, { ic: <Loop /> }, { ic: <TableIcon /> },
  { ic: <AbcIcon /> }, { ic: <StopLoop /> }, { ic: <Flow1 /> }, { ic: <Flow2 /> }, { ic: <Flow3 /> }, { ic: <ArrowIn /> }, { ic: <Moon /> }, { ic: <Plug w={31} /> }, { ic: <Pin /> },
  { ic: <GreenSquare>
    <circle cx="15" cy="15" r="10" fill="url(#bg)" />
    <path d="M9 9C12 7 15 9 14 12C13 15 10 15 9 13ZM17 16C20 15 23 16 21 20C19 22 17 20 17 16Z" fill="#30a050" />
  </GreenSquare> },
  { ic: <GreenSquare>
    <rect x="4" y="4" width="22" height="22" fill="none" stroke="#50a030" strokeDasharray="2 1" />
    <path d="M8 10V22H14V12H22V22" fill="none" stroke="#101010" />
    <rect x="6" y="5" width="5" height="6" fill="#90e050" stroke="#408020" strokeWidth=".5" />
    <rect x="12" y="13" width="6" height="6" fill="#3090e0" stroke="#205090" strokeWidth=".5" />
    <rect x="20" y="20" width="6" height="6" fill="#e03020" stroke="#901010" strokeWidth=".5" />
  </GreenSquare> },
  { ic: <GreenSquare top="url(#rg)" stroke="#d02020"><YellowSign /></GreenSquare> },
  { ic: <GreenSquare top="url(#og)" stroke="#e88020">
    <g transform="translate(3 3) scale(.85)"><path d="M4 14A10 10 0 0 1 20 6" fill="none" stroke="#ffd030" strokeWidth="4" /><path d="M24 14A10 10 0 0 1 8 22" fill="none" stroke="#ffd030" strokeWidth="4" /></g>
    <BlueCurl />
  </GreenSquare> },
  { ic: <GreenSquare><YellowSign /><BlueCurl flip /></GreenSquare> },
];

const props: { n: string; v?: string; bold?: boolean; sub?: boolean; ls?: number }[] = [
  { n: "接続名", v: "syscon_Garoon" },
  { n: "URL", v: "https://442w4.cyb...", bold: true, ls: 0.5 },
  { n: "ユーザー", v: "scha@asteria.com", bold: true, ls: 0.8 },
  { n: "パスワード", v: "********", bold: true, ls: 0.8 },
  { n: "ログ設定", sub: true },
  { n: "プロキシ設定", sub: true, ls: 0.2 },
  { n: "コネクションをプ...", v: "はい", ls: 0.6 },
];

export default function App() {
  return (
    <Window>
      <Global />
      <Defs />
      <TitleBar>
        <AppIcon />
        <TitleText>フローデザイナー</TitleText>
        <WinButtons>
          <WinButton>
            <Ico width="10" height="10" viewBox="0 0 10 10"><path d="M0 5.500H10" stroke="#111" /></Ico>
          </WinButton>
          <WinButton>
            <Ico width="10" height="10" viewBox="0 0 10 10"><rect x=".5" y=".5" width="9" height="9" fill="none" stroke="#111" /></Ico>
          </WinButton>
          <WinButton>
            <Ico width="10" height="10" viewBox="0 0 10 10"><path d="M0 0L10 10M10 0L0 10" stroke="#111" /></Ico>
          </WinButton>
        </WinButtons>
      </TitleBar>

      <MenuBar>
        <MenuItem $w={62} $open $ls={-0.7}>ファイル(F)</MenuItem>
        <MenuItem $w={53}>編集(E)</MenuItem>
        <MenuItem $w={53}>表示(V)</MenuItem>
        <MenuItem $w={53}>実行(R)</MenuItem>
        <MenuItem $w={55} $ls={-0.8}>ツール(T)</MenuItem>
        <MenuItem $w={97} $ls={-0.4}>バージョン管理(S)</MenuItem>
        <MenuItem $w={62}>ヘルプ(H)</MenuItem>
      </MenuBar>

      <ToolRow>
        <ToolGroup $w={355}>
          <ToolCell $w={245}><Bin /></ToolCell>
          <ToolSep $mx={1} />
          <ToolCell><Scissors /></ToolCell>
          <ToolCell><Copy /></ToolCell>
          <ToolCell><Paste /></ToolCell>
          <GroupEnd $w={12} />
        </ToolGroup>
        <ToolGroup $w={161} $ml={4}>
          <Grip />
          <ToolCell><Compile /></ToolCell>
          <ToolCell><Play /></ToolCell>
          <ToolCell><Debug /></ToolCell>
          <ToolCell><Bolt /></ToolCell>
          <ToolCell $w={17}><Caret /></ToolCell>
          <GroupEnd $w={8} />
        </ToolGroup>
        <ToolGroup $w={258} $ml={4}>
          <Grip $w={9} />
          <ToolCell><NavCircle dir={-1} /></ToolCell>
          <ToolCell><NavCircle dir={1} /></ToolCell>
          <Combo>
            100%
            <Chevron dir="down" color="#a8a8a8" sw={1} />
          </Combo>
          <ToolSep $mx={6} />
          <ToolCell $w={24}><Fit /></ToolCell>
          <GroupEnd $w={12} />
        </ToolGroup>
        <ToolGroup $w={241} $ml={2}>
          <Grip $w={10} />
          {[0, 1, 2, 3, 4, 5, 6].map((k) => (
            <ToolCell key={k} $w={31.5}><DbGray kind={k} /></ToolCell>
          ))}
          <GroupEnd $w={11} />
        </ToolGroup>
      </ToolRow>

      <PaletteTabs>
        <PaletteTab $w={290}>インターネット</PaletteTab>
        {topTabs.map(([t, w, ls]) => (
          <PaletteTab key={t} $w={w} $ls={ls}>{t}</PaletteTab>
        ))}
        <PaletteTab $w={29} $ragged>Az...</PaletteTab>
        <TabArrows>
          <TabArrow><TriBtn dir="l" /></TabArrow>
          <TabArrow><TriBtn dir="r" on /></TabArrow>
        </TabArrows>
      </PaletteTabs>

      <PaletteBody>
        {[0, 1, 2, 3, 4, 5].map((k) => <PaletteCell key={k} $shift={k === 5 ? 4 : 0}>{k === 5 ? <RadioFork /> : null}</PaletteCell>)}
        {paletteIcons.map((p, i) => <PaletteCell key={i} $shift={p.shift}>{p.ic}</PaletteCell>)}
        <PaletteScroll>
          <Chevron dir="up" size={11} />
          <Chevron dir="down" size={11} />
        </PaletteScroll>
      </PaletteBody>

      <Main>
        <LeftCol>
          <ListArea>
            <ListFrame>
              <ListWhite />
              <VScroll>
                <Chevron dir="up" size={11} />
                <VThumb />
                <Chevron dir="down" size={11} />
              </VScroll>
              <HScrollSlot><Chevron dir="right" size={11} /></HScrollSlot>
            </ListFrame>
          </ListArea>
          <LeftTools>
            <Grip />
            <ToolCell><Plug w={20} /></ToolCell>
            <ToolCell><RefreshBlue /></ToolCell>
            <ToolSep $mx={2} />
            <ToolCell $w={33}><PlugSave /></ToolCell>
            <ToolCell $w={30}><PlugNo /></ToolCell>
            <ToolCell><Cams /></ToolCell>
          </LeftTools>
          <Tree>
            <TreeRow>
              <ConnRoot />
              <TreeLabel $ml={5} $ls={-1.5}>コネクション</TreeLabel>
            </TreeRow>
            <TreeRow $child>
              <PlusBox />
              <Dots />
              <DbBlue />
              <TreeLabel $ml={7}>RDB</TreeLabel>
            </TreeRow>
            <TreeRow $child>
              <PlusBox />
              <Dots />
              <NowMark>now.</NowMark>
              <TreeLabel $ml={2}>ServiceNow</TreeLabel>
            </TreeRow>
          </Tree>
          <BottomTabs $w={260}>
            <TabShape w={260} a={2} sel={[86, 163]} />
            <BottomTabLabel $ml={24}><WinTab kind="file" /><Txt $ls={-1}>ファイル</Txt></BottomTabLabel>
            <BottomTabLabel $ml={12}><WinTab kind="conn" /><Txt $ls={-1.5}>コネクション</Txt></BottomTabLabel>
          </BottomTabs>
        </LeftCol>

        <Canvas />

        <RightCol>
          <PropBox>
            <PropTabs>
              <PropTab $w={37} $on>基本</PropTab>
              <PropTab $w={32}>詳細</PropTab>
            </PropTabs>
            <PropPanel>
              <PropFrame>
                <PropRow $head>
                  <PropName $head><Txt $ls={-0.9}>プロパティ名</Txt></PropName>
                  <PropValue $head>値</PropValue>
                  <PropEnd $head />
                </PropRow>
                {props.map((p) => (
                  <PropRow key={p.n}>
                    <PropName $bold={p.bold} $indent={p.sub ? 9 : 0}>
                      {p.sub && <Expand />}
                      <Txt $fs={12} $ls={p.ls}>{p.n}</Txt>
                    </PropName>
                    <PropValue>{p.v}</PropValue>
                    <PropEnd />
                  </PropRow>
                ))}
              </PropFrame>
            </PropPanel>
          </PropBox>
          <WhitePanel />
          <BottomTabs $w={245}>
            <TabShape w={245} a={3} sel={[88, 148]} />
            <BottomTabLabel $ml={24}><WinTab kind="var" />変数</BottomTabLabel>
            <BottomTabLabel $ml={11}><WinTab kind="stream" /><Txt $ls={-0.9}>ストリーム</Txt></BottomTabLabel>
          </BottomTabs>
        </RightCol>
      </Main>

      <LogBox>Application started: 7906ms</LogBox>

      <StatusBar>
        <StatusHome><WinTab kind="file" />&lt;HOME&gt;</StatusHome>
      </StatusBar>

      <FileMenu>
        <MenuRow $h={32}><MenuIconSlot $pl={6}><Server /></MenuIconSlot><Txt $ls={-0.7}>サーバーを追加(C)</Txt></MenuRow>
        <MenuSep />
        <MenuRow $h={23}>
          <MenuIconSlot /><Txt $fs={12}>新規作成(N)</Txt>
          <MenuShortcut><Chevron dir="right" size={8} /></MenuShortcut>
        </MenuRow>
        <MenuSep />
        <MenuRow $h={25}><MenuIconSlot /><Txt $ls={-0.9}>ローカルファイルを開く</Txt><MenuShortcut>Ctrl+O</MenuShortcut></MenuRow>
        <MenuRow $h={26}><MenuIconSlot><SaveBlue /></MenuIconSlot><Txt $fs={12} $ls={-0.5}>保存(S)</Txt><MenuShortcut>Ctrl+S</MenuShortcut></MenuRow>
        <MenuRow $h={32} $off><MenuIconSlot><SaveChat /></MenuIconSlot><Txt $ls={-0.6}>バックアップ(B)</Txt></MenuRow>
        <MenuRow $h={22} $active><MenuIconSlot $active /><Txt $ls={-0.9}>テンプレートのインポート(I)</Txt></MenuRow>
        <MenuRow $h={22} $off><MenuIconSlot /><Txt>閉じる(C)</Txt></MenuRow>
        <MenuRow $h={22} $off><MenuIconSlot /><Txt>すべて閉じる(A)</Txt></MenuRow>
        <MenuSep />
        <MenuRow $h={24}><MenuIconSlot /><Txt $fs={12} $ls={-0.3}>終了(X)</Txt></MenuRow>
      </FileMenu>
    </Window>
  );
}
